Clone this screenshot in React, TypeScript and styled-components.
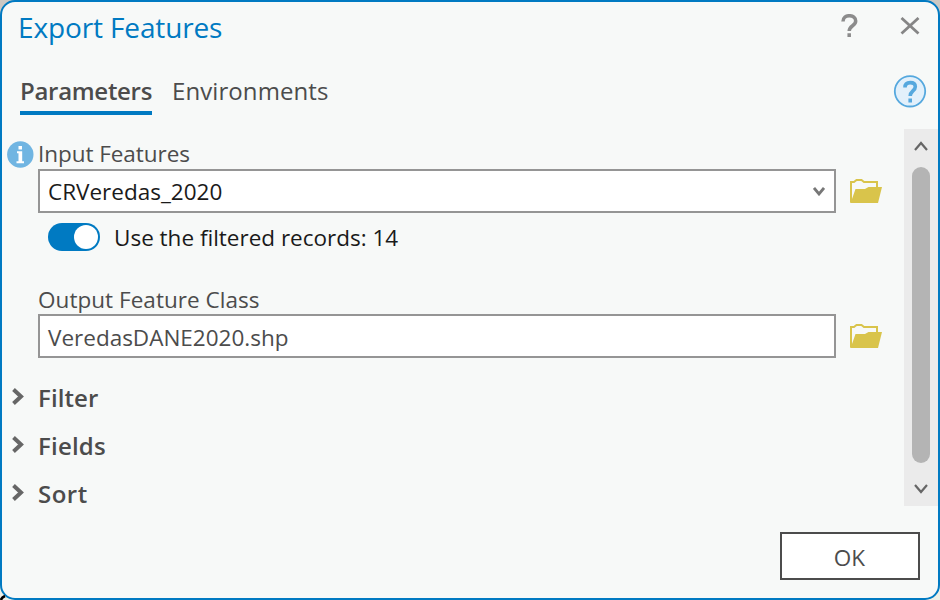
import React from "react";
import styled, { createGlobalStyle } from "styled-components";

const Global = createGlobalStyle`
  * { box-sizing: border-box; }
  body { margin: 0; background: #d9d7cd; font-family: "Open Sans", "Segoe UI", sans-serif; color: #4c4c4c; }
  svg { display: block; }
`;

const Desktop = styled.div`
  position: relative;
  width: 940px;
  height: 600px;
  overflow: hidden;
  background: linear-gradient(#cbc8c3 50%, #eef0e6 50%);
`;
const MapStroke = styled.svg`
  position: absolute;
  left: 0;
  bottom: 0;
`;
const Dialog = styled.div`
  position: relative;
  width: 940px;
  height: 600px;
  border: 2px solid #007ac2;
  border-radius: 15px;
  background: #f7f9f8;
  display: flex;
  flex-direction: column;
`;
const Header = styled.header`
  height: 50px;
  padding: 0 18px 0 16px;
  display: flex;
  align-items: center;
`;
const Title = styled.h1`
  flex: 1;
  margin: 0;
  font-size: 28px;
  font-weight: 400;
  line-height: 50px;
  letter-spacing: -0.13px;
  color: #007ac2;
`;
const IconButton = styled.button<{ $ml?: number }>`
  border: 0;
  padding: 0 0 2px;
  margin-left: ${(p) => p.$ml ?? 0}px;
  background: none;
`;
const Tabs = styled.nav`
  height: 77px;
  padding: 21px 11px 0 18px;
  display: flex;
  align-items: flex-start;
`;
const Tab = styled.div<{ $active?: boolean }>`
  height: 42px;
  margin-right: 20px;
  font-size: 24px;
  line-height: 36px;
  white-space: nowrap;
  font-weight: ${(p) => (p.$active ? 600 : 400)};
  letter-spacing: ${(p) => (p.$active ? "-0.3px" : "0.08px")};
  width: ${(p) => (p.$active ? "132px" : "auto")};
  border-bottom: 4px solid ${(p) => (p.$active ? "#007ac2" : "transparent")};
`;
const TabHelp = styled.div`
  margin: 1px 0 0 auto;
`;
const Body = styled.div`
  height: 377px;
  display: flex;
`;
const Form = styled.main`
  flex: 1;
  padding: 11px 22px 0 5px;
  font-size: 22.5px;
`;
const FieldGrid = styled.div`
  display: grid;
  grid-template-columns: 31px 798px 32px;
`;
const Info = styled.div`
  height: 29px;
  display: flex;
  align-items: center;
`;
const Label = styled.label<{ $lift?: boolean }>`
  grid-column: 2 / 4;
  height: 29px;
  line-height: ${(p) => (p.$lift ? 27 : 29)}px;
  letter-spacing: ${(p) => (p.$lift ? "-0.05px" : "0.04px")};
`;
const Control = styled.div<{ $dark?: boolean }>`
  grid-column: 2;
  height: 44px;
  padding: ${(p) => (p.$dark ? "1px 9px 0 8px" : "3px 8px 0")};
  border: 2px solid #959595;
  background: #fff;
  color: ${(p) => (p.$dark ? "#1a1a1a" : "#4c4c4c")};
  display: flex;
  align-items: center;
  justify-content: space-between;
  line-height: 36px;
`;
const Browse = styled.button`
  border: 0;
  padding: 0;
  margin-left: 14px;
  width: 32px;
  background: none;
  display: flex;
  align-items: center;
`;
const ToggleRow = styled.div`
  height: 48px;
  padding-left: 41px;
  display: flex;
  align-items: center;
  gap: 14px;
  color: #1a1a1a;
  white-space: nowrap;
`;
const Switch = styled.span`
  width: 52px;
  height: 28px;
  padding: 2px;
  margin-top: -1px;
  border-radius: 14px;
  background: #007ac2;
  display: flex;
  justify-content: flex-end;
`;
const Knob = styled.span`
  width: 24px;
  height: 24px;
  border-radius: 50%;
  background: #fff;
`;
const OutputBlock = styled.section`
  margin-top: 24px;
`;
const Sections = styled.section`
  margin-top: 14px;
`;
const SectionRow = styled.div`
  height: 48px;
  padding-left: 5px;
  display: flex;
  align-items: center;
  gap: 13px;
  font-size: 24px;
  font-weight: 600;
`;
const SectionName = styled.span<{ $spacing: number }>`
  padding-top: 3px;
  line-height: 36px;
  letter-spacing: ${(p) => p.$spacing}px;
`;
const Scrollbar = styled.aside`
  width: 34px;
  background: #ebebeb;
  display: flex;
  flex-direction: column;
  align-items: center;
  padding: 12px 0;
`;
const Thumb = styled.div`
  width: 18px;
  height: 296px;
  margin: 16px 0 21px;
  border-radius: 9px;
  background: #b4b4b4;
`;
const Footer = styled.footer`
  flex: 1;
  padding: 26px 18px 0 0;
  display: flex;
  justify-content: flex-end;
`;
const OkButton = styled.button`
  width: 140px;
  height: 48px;
  padding: 2px 1px 0 0;
  border: 2px solid #4c4c4c;
  background: #fff;
  color: #4c4c4c;
  font: 400 22.5px "Open Sans", sans-serif;
`;

const Chevron = ({ dir, w, h, color = "#666", stroke = 2.2 }: { dir: "up" | "down" | "right"; w: number; h: number; color?: string; stroke?: number }) => {
  const d = dir === "up" ? `M1 ${h - 1}L${w / 2} 2L${w - 1} ${h - 1}`
    : dir === "down" ? `M1 1L${w / 2} ${h - 2}L${w - 1} 1`
    : `M1.5 1.5L${w - 4} ${h / 2}L1.5 ${h - 1.5}`;
  return <svg width={w} height={h}><path d={d} fill="none" stroke={color} strokeWidth={stroke} /></svg>;
};

const Folder = () => (
  <svg width="32" height="24" viewBox="0 0 32 24">
    <path d="M1 23V3H4L6.5 1H11.5L14 3H27V9" fill="none" stroke="#d9c44b" strokeWidth="2" />
    <path d="M0 24L2 20L5.5 10H15L18.5 8H32L28 24Z" fill="#d9c44b" />
  </svg>
);

const sections: [string, number][] = [["Filter", 0.1], ["Fields", 0.2], ["Sort", 0.5]];

export default function App() {
  return (
    <Desktop>
      <Global />
      <Dialog>
        <Header>
          <Title>Export Features</Title>
          <IconButton aria-label="Help">
            <svg width="18" height="24"><path d="M2 7.5C2 3.5 5 1.7 8.3 1.7C12 1.7 14.7 3.6 14.7 7C14.7 12 8.2 11.5 8.2 17M8.2 19.3V23" fill="none" stroke="#8c8c8c" strokeWidth="3.5" /></svg>
          </IconButton>
          <IconButton aria-label="Close" $ml={41}>
            <svg width="20" height="18"><path d="M1.5 1L18.5 16.5M18.5 1L1.5 16.5" stroke="#868686" strokeWidth="2.8" /></svg>
          </IconButton>
        </Header>
        <Tabs>
          <Tab $active>Parameters</Tab>
          <Tab>Environments</Tab>
          <TabHelp>
            <svg width="34" height="34"><circle cx="17" cy="17.3" r="15.2" fill="#e2f0fb" stroke="#55a8de" strokeWidth="1.8" /><path d="M12 13.5C12 10 14 8.6 17.2 8.6C20.5 8.6 22.3 10 22.3 12.7C22.3 17 17.2 17 17.2 22M17.2 24.5V28.5" fill="none" stroke="#55a8de" strokeWidth="3.6" /></svg>
          </TabHelp>
        </Tabs>
        <Body>
          <Form>
            <FieldGrid>
              <Info>
                <svg width="27" height="27"><circle cx="13.3" cy="13.5" r="13.2" fill="#70b5e2" /><path d="M11.5 5H15V8.5H11.5ZM10 10.3H15.2V20.3H17V22.3H9.5V20.3H11.5V12.3H10Z" fill="#fff" /></svg>
              </Info>
              <Label $lift>Input Features</Label>
              <Control $dark>CRVeredas_2020<Chevron dir="down" w={12} h={9} stroke={2.8} color="#777" /></Control>
              <Browse aria-label="Browse input"><Folder /></Browse>
            </FieldGrid>
            <ToggleRow><Switch><Knob /></Switch>Use the filtered records: 14</ToggleRow>
            <OutputBlock>
              <FieldGrid>
                <Label>Output Feature Class</Label>
                <Control>VeredasDANE2020.shp</Control>
                <Browse aria-label="Browse output"><Folder /></Browse>
              </FieldGrid>
            </OutputBlock>
            <Sections>
              {sections.map(([name, spacing]) => (
                <SectionRow key={name}>
                  <Chevron dir="right" w={13} h={17} stroke={4} />
                  <SectionName $spacing={spacing}>{name}</SectionName>
                </SectionRow>
              ))}
            </Sections>
          </Form>
          <Scrollbar>
            <Chevron dir="up" w={14} h={10} />
            <Thumb />
            <Chevron dir="down" w={14} h={10} />
          </Scrollbar>
        </Body>
        <Footer><OkButton>OK</OkButton></Footer>
      </Dialog>
      <MapStroke width="10" height="8"><path d="M1 8Q1.5 5.5 5 4" fill="none" stroke="#000" strokeWidth="2.6" /></MapStroke>
    </Desktop>
  );
}
